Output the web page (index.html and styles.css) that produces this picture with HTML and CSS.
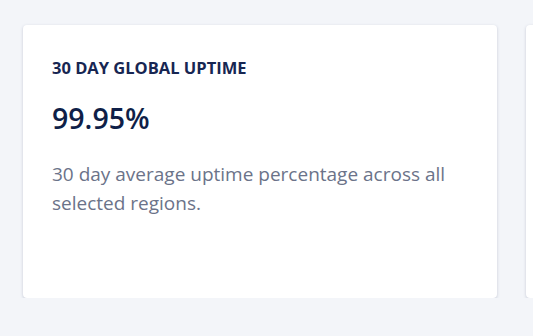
FILE: index.html
```html
<!DOCTYPE html>
<html lang="en">
<head>
  <meta charset="UTF-8">
  <title>Uptime</title>
  <link rel="stylesheet" href="styles.css">
</head>
<body>

  <div class="cards">
    <div class="card">
      <h2 class="card-title">30 DAY GLOBAL UPTIME</h2>
      <div class="card-value">99.95%</div>
      <p class="card-text">30 day average uptime percentage across all selected regions.</p>
    </div>
    <div class="card card-next"></div>
  </div>

</body>
</html>
```

FILE: styles.css
```css
html, body {
  margin: 0;
  height: 100%;
  overflow: hidden;
}
body {
  font-family: "Open Sans", "Noto Sans", sans-serif;
  background: #f3f5f9;
  color: #1b2a4e;
}
.cards {
  display: flex;
  gap: 29px;
  padding: 25px 0 0 23px;
  overflow: hidden;
}
.card {
  flex: 0 0 474px;
  box-sizing: border-box;
  height: 273px;
  background: #fff;
  border-radius: 4px;
  box-shadow: 0 1px 3px rgba(60, 72, 110, 0.25);
  padding: 33px 29px;
}
.card-next {
  flex: 0 0 40px;
}
.card-title {
  margin: 0;
  font-size: 16.5px;
  font-weight: 700;
  line-height: 20px;
  color: #172652;
}
.card-value {
  margin-top: 23px;
  font-size: 28.5px;
  font-weight: 600;
  line-height: 34px;
  color: #0f1f48;
}
.card-text {
  margin: 25px 0 0;
  font-size: 19px;
  line-height: 29px;
  color: #6b7389;
}
```
